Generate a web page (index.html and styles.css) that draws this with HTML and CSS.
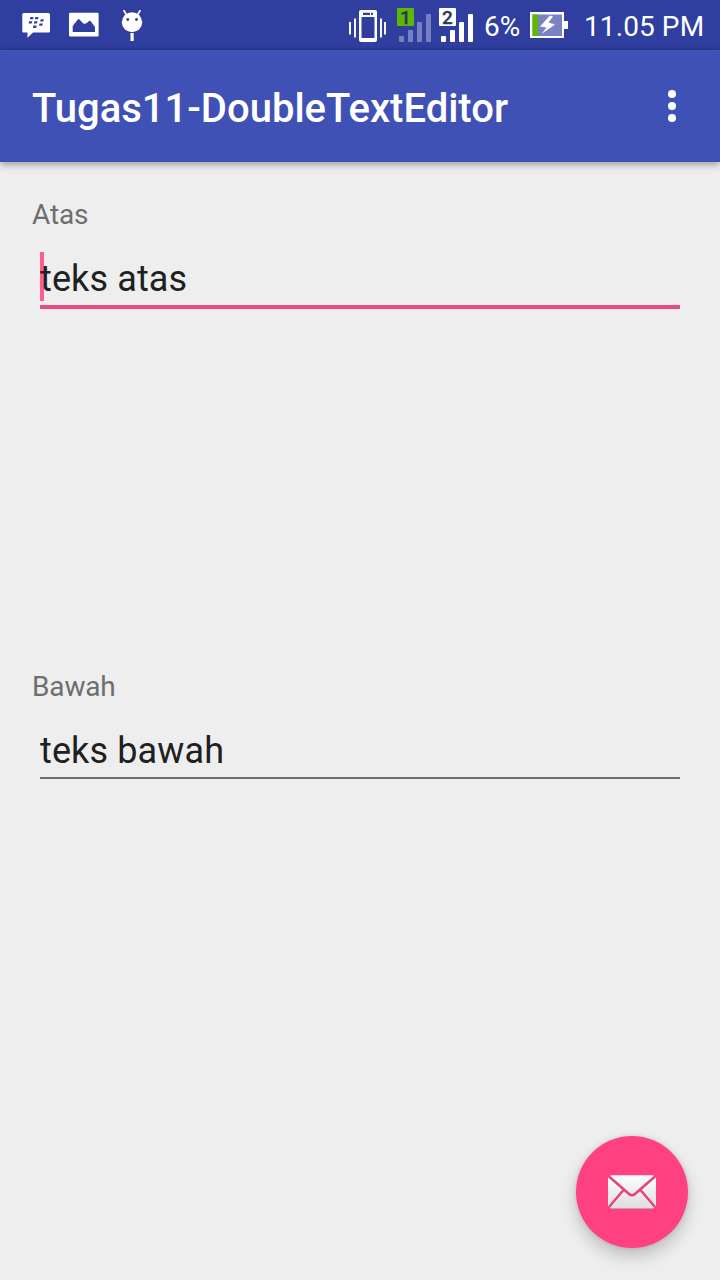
FILE: index.html
```html
<!DOCTYPE html>
<html lang="id">
<head>
<meta charset="utf-8">
<title>Tugas11-DoubleTextEditor</title>
<link rel="stylesheet" href="styles.css">
</head>
<body>
<div class="screen">
  <header class="status">
    <div class="notifications">
      <svg width="28" height="26" viewBox="22 12 28 26">
        <path fill="#fff" d="M23.500 13H48.500Q50 13 50 14.500V31Q50 32.500 48.500 32.500H33L27.500 37.800V32.500H23.500Q22.300 32.500 22.300 31V14.500Q22.300 13 23.500 13Z"/>
        <g fill="#303f9f">
          <path d="M30.400 17h3.200l-.6 2.300h-3.200zM35.400 17h3.200l-.6 2.300h-3.200zM29.100 21.300h3.200l-.6 2.300h-3.200zM34.400 21.300h3.200l-.6 2.300h-3.200zM40.700 19.200h3.200l-.6 2.300h-3.200zM39.600 23.400h3.200l-.6 2.300h-3.200zM33.500 25.500h3.200l-.6 2.500h-3.200z"/>
        </g>
      </svg>
      <svg width="30" height="26" viewBox="69 12 30 26">
        <rect x="69" y="12.700" width="29.600" height="23.800" rx="1.200" fill="#fff"/>
        <path fill="#303f9f" d="M72.700 32V26L78 19.200Q78.600 18.600 79.200 19.200L83.600 23.800L86 23.500L89.500 20.800Q90.100 20.400 90.700 21.200L95 27V32Z"/>
      </svg>
      <svg width="24" height="34" viewBox="120 9 24 34">
        <path d="M124 10.700l2.500 4M140 10.700l-2.500 4" stroke="#fff" stroke-width="1.700" stroke-linecap="round"/>
        <ellipse cx="132" cy="22.300" rx="10.200" ry="10" fill="#fff"/>
        <circle cx="127.800" cy="19.500" r="1.400" fill="#303f9f"/>
        <circle cx="136.500" cy="19.500" r="1.400" fill="#303f9f"/>
        <rect x="130.500" y="33" width="3.200" height="8" fill="#fff"/>
      </svg>
    </div>
    <div class="indicators">
      <svg width="38" height="34" viewBox="348 9 38 34">
        <path fill="#fff" fill-rule="evenodd" d="M361 10H375Q377 10 377 12V40Q377 42 375 42H361Q359 42 359 40V12Q359 10 361 10ZM361.500 17V38H374.500V17ZM363 12.700V15H370V12.700ZM371 12.700V15H373V12.700Z"/>
        <path stroke="#fff" stroke-width="1.900" d="M350 22v12.500M355 18.500v19M381 18.500v19M385 22v12.500"/>
      </svg>
      <svg class="sim-one" width="36" height="36" viewBox="396 7 36 36">
        <g class="bars-off"><rect x="399" y="36" width="5" height="6" rx="1"/><rect x="408" y="30" width="5" height="12" rx="1"/><rect x="417" y="22" width="5" height="20" rx="1"/><rect x="426" y="14" width="5" height="28" rx="1"/></g>
        <rect x="397" y="8" width="17" height="18" rx="1" fill="#5db800"/>
        <text class="sim" x="405.500" y="23.500">1</text>
      </svg>
      <svg class="sim-two" width="36" height="36" viewBox="438 7 36 36">
        <g fill="#fff"><rect x="441" y="36" width="5" height="6" rx="1"/><rect x="450" y="30" width="5" height="12" rx="1"/><rect x="459" y="22" width="5" height="20" rx="1"/><rect x="468" y="14" width="5" height="28" rx="1"/><rect x="439" y="8" width="17" height="18" rx="1"/></g>
        <text class="sim" x="447.500" y="23.500">2</text>
      </svg>
      <span class="percent">6%</span>
      <svg class="battery" width="38" height="28" viewBox="530 11 38 28">
        <path fill="#fff" d="M530 12h34v9h4v8h-4v9h-34z"/>
        <rect x="532.500" y="14.500" width="29.500" height="21.500" fill="#7982c3"/>
        <rect x="532.500" y="14.500" width="5.500" height="21.500" fill="#5db800"/>
        <path fill="#fff" d="M550 15.500L540 26.500L546.500 27.500L541.500 34L555 24.500L548.500 22.500L553 16.500Z"/>
      </svg>
      <span class="clock">11.05 PM</span>
    </div>
  </header>
  <div class="toolbar">
    <h1 class="title">Tugas11-DoubleTextEditor</h1>
    <svg width="8" height="32" viewBox="0 0 8 32" fill="#fff"><circle cx="4" cy="4" r="4"/><circle cx="4" cy="16" r="4"/><circle cx="4" cy="28" r="4"/></svg>
  </div>
  <main class="content">
    <section class="pane">
      <div class="label">Atas</div>
      <div class="field focused"><span class="caret"></span><span class="value">teks atas</span></div>
    </section>
    <section class="pane">
      <div class="label">Bawah</div>
      <div class="field"><span class="value">teks bawah</span></div>
    </section>
  </main>
  <div class="fab">
    <svg width="48" height="34" viewBox="0 0 48 34">
      <defs><linearGradient id="paper" x1="0" y1="0" x2="0" y2="1"><stop offset="0" stop-color="#fff"/><stop offset="1" stop-color="#dedede"/></linearGradient></defs>
      <path fill="url(#paper)" d="M3 .2H45L48 3V31L45 33.400H3L0 31V3Z"/>
      <path fill="none" stroke="#e4457a" stroke-width="2.500" d="M1 1.500L20.500 18.500Q24 22 27.500 18.500L47 1.500M15.500 15L1 32M32.500 15L47 32"/>
      <path stroke="#c0a0ac" stroke-width=".7" d="M3 33.500H45"/>
    </svg>
  </div>
</div>
</body>
</html>
```
FILE: styles.css
```css
body { margin: 0; font-family: Roboto, sans-serif; }
.screen { position: relative; display: flex; flex-direction: column; width: 720px; height: 1280px; background: #eee; overflow: hidden; }
.status { display: flex; justify-content: space-between; box-sizing: border-box; height: 50px; padding: 0 16px 0 22px; background: linear-gradient(#303f9f 46px, #2b3990); color: #fff; font-size: 28px; }
.notifications, .indicators { display: flex; align-items: center; height: 52px; }
.notifications { gap: 20px; }
.notifications svg:first-child { margin-top: -2px; margin-right: -1px; }
.notifications svg:nth-child(2) { margin-top: -2px; margin-right: 1px; }
.sim-one { margin-left: 10px; margin-top: -2px; overflow: visible; }
.sim-two { margin-left: 6px; margin-top: -2px; overflow: visible; }
.bars-off { fill: #7781c2; }
.sim { font: 500 19px Roboto, sans-serif; fill: #2b3668; stroke: #2b3668; stroke-width: .3px; text-anchor: middle; }
.percent { width: 37px; margin-left: 10px; }
.battery { margin-left: 9px; margin-top: -2px; }
.clock { width: 120px; margin-left: 16px; white-space: nowrap; letter-spacing: .1px; }
.toolbar { position: relative; display: flex; align-items: center; justify-content: space-between; box-sizing: border-box; height: 112px; padding: 0 44px 0 32px; background: #3f51b5; box-shadow: 0 3px 7px rgba(0, 0, 0, .32); color: #fff; }
.title { margin: 6px 0 0; font-size: 40px; font-weight: 500; line-height: 48px; }
.content { display: grid; grid-template-rows: 472px 472px; padding: 32px 32px 0; }
.label { height: 42px; color: #6e6e6e; font-size: 28px; line-height: 42px; letter-spacing: -.15px; }
.field { position: relative; box-sizing: border-box; height: 71px; margin: 0 8px; padding-top: 20px; border-bottom: 2px solid #6e6e6e; color: #202020; font-size: 36px; line-height: 46px; letter-spacing: .12px; }
.focused { height: 73px; border-bottom: 4px solid #ea4c83; }
.value { position: relative; }
.caret { position: absolute; left: 0; top: 16px; width: 4px; height: 49px; background: #ff5c93; }
.fab { position: absolute; right: 32px; bottom: 32px; display: flex; align-items: center; justify-content: center; width: 112px; height: 112px; border-radius: 50%; background: #ff4081; box-shadow: 0 9px 16px rgba(0, 0, 0, .19), 0 0 5px rgba(0, 0, 0, .12); }
```
